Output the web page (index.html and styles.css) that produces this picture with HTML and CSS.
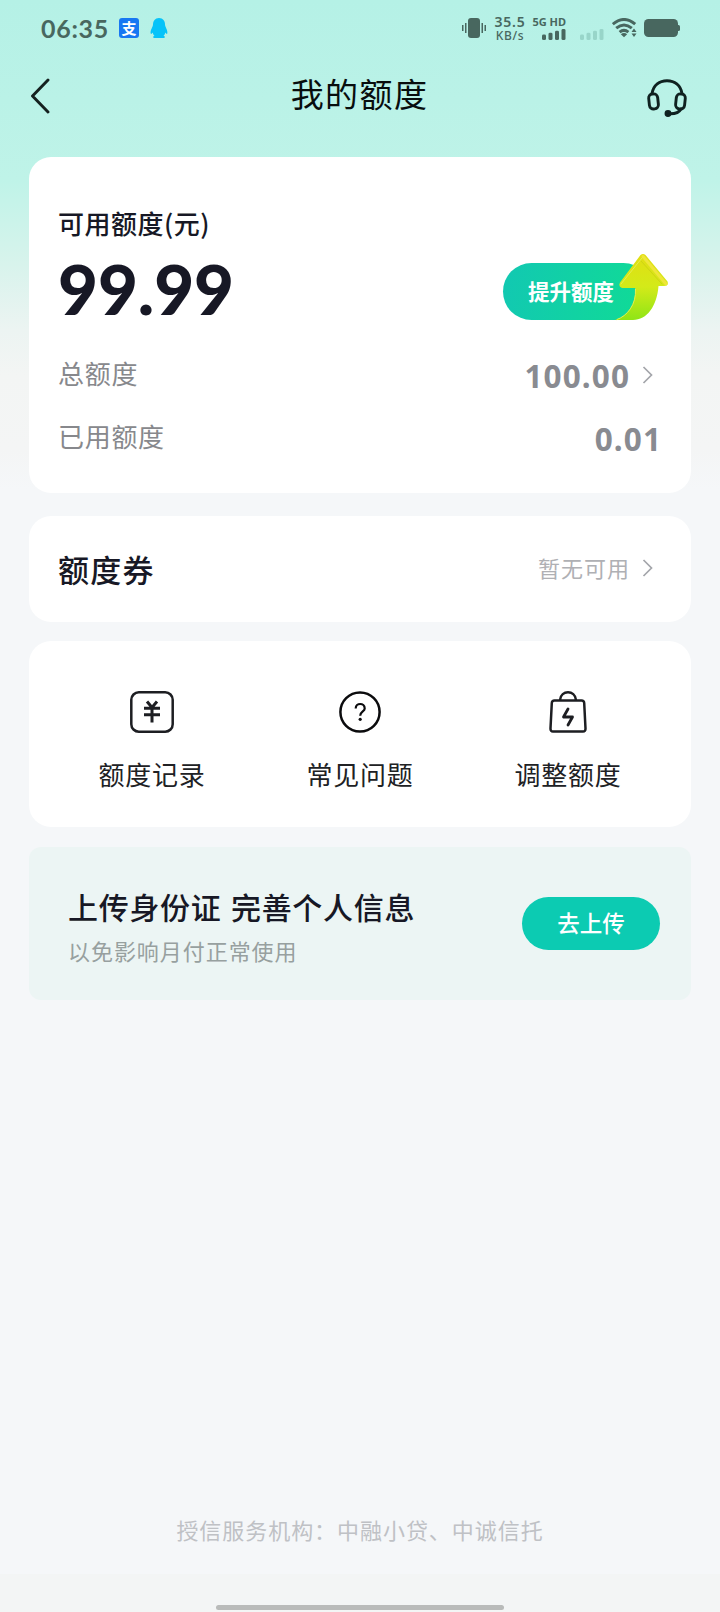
FILE: index.html
```html
<!DOCTYPE html>
<html lang="zh-CN">
<head>
<meta charset="utf-8">
<title>我的额度</title>
<link rel="stylesheet" href="styles.css">
</head>
<body>
<div class="page">
  <header class="status">
    <span class="clock">06:35</span>
    <svg class="app-alipay" width="20" height="20" viewBox="0 0 20 20"><rect width="20" height="20" rx="3" fill="#1777f2"/><text class="alipay-text" x="10" y="15.500" text-anchor="middle">支</text></svg>
    <svg class="app-qq" width="18" height="20" viewBox="0 0 18 20"><path d="M9 0C5 0 3 3 3 6.500C3 9 0 12 0.700 15.500C1 16.500 2 15.500 2.700 14.500C3 16 3.600 17 4.500 17.800C3 18 2.500 19.800 4 20H14C15.500 19.800 15 18 13.500 17.800C14.400 17 15 16 15.300 14.500C16 15.500 17 16.500 17.300 15.500C18 12 15 9 15 6.500C15 3 13 0 9 0Z" fill="#06c3f9"/></svg>
    <span class="spacer"></span>
    <svg width="24" height="20" viewBox="0 0 24 20" fill="#48675f"><rect x="6" width="12" height="20" rx="3"/><rect x="0" y="7" width="1.500" height="6"/><rect x="3" y="5" width="1.500" height="10"/><rect x="19.500" y="5" width="1.500" height="10"/><rect x="22.500" y="7" width="1.500" height="6"/></svg>
    <div class="speed"><b>35.5</b><span>KB/s</span></div>
    <div class="network"><span>5G HD</span>
      <svg width="24" height="11" viewBox="0 0 24 12" preserveAspectRatio="none" fill="#48675f"><rect y="6" width="4" height="6" rx="1.500"/><rect x="6.500" y="4" width="4" height="8" rx="1.500"/><rect x="13" y="2" width="4" height="10" rx="1.500"/><rect x="19.500" y="0" width="4" height="12" rx="1.500"/></svg>
    </div>
    <svg class="sim2" width="24" height="11" viewBox="0 0 24 12" preserveAspectRatio="none" fill="#98d5c9"><rect y="6" width="4" height="6" rx="1.500"/><rect x="6.500" y="4" width="4" height="8" rx="1.500"/><rect x="13" y="2" width="4" height="10" rx="1.500"/><rect x="19.500" y="0" width="4" height="12" rx="1.500"/></svg>
    <svg class="wifi" width="25" height="20" viewBox="0 0 25 20" fill="none" stroke="#48675f" stroke-width="3"><path d="M0.800 6.200Q12 -3.200 23.200 6.200M4.200 10.200Q12 3.700 19.800 10.200M7.600 14.100Q12 10.600 16.400 14.100"/><path d="M8.800 16.200Q12 13.900 15.200 16.200L12 19.300Z" fill="#48675f" stroke="none"/><path d="M19.500 14L22 10.500L24.500 14ZM19.500 15.500L22 19L24.500 15.500Z" fill="#48675f" stroke="none"/></svg>
    <svg width="36" height="18" viewBox="0 0 36 18" fill="#48675f"><rect width="34" height="18" rx="4.500"/><rect x="32" y="6" width="4" height="6" rx="1.500"/></svg>
  </header>

  <nav class="nav">
    <svg width="20" height="36" viewBox="0 0 20 36" fill="none" stroke="#15211f" stroke-width="2.900" stroke-linecap="round" stroke-linejoin="round"><path d="M18 2L2.500 18L18 34"/></svg>
    <h1 class="title">我的额度</h1>
    <svg class="service" width="40" height="38" viewBox="0 0 40 38" fill="none" stroke="#0f2120" stroke-width="2.900" stroke-linecap="round"><path d="M5 14.500C6.500 6 12.500 1.700 20 1.700S33.500 6 35 14.500"/><rect x="2" y="15" width="9" height="15" rx="4" transform="rotate(-6 6 22)"/><rect x="29" y="15" width="9" height="15" rx="4" transform="rotate(6 34 22)"/><path d="M34 30C32 33.700 28 35 22 34.700"/><circle cx="21" cy="34.500" r="2" fill="#0f2120"/></svg>
  </nav>

  <main class="content">
    <section class="card quota">
      <div class="available">
        <div>
          <div class="label">可用额度(元)</div>
          <div class="amount">99.99</div>
        </div>
        <div class="raise">提升额度
          <svg class="raise-arrow" width="56" height="72" viewBox="0 0 56 72">
            <defs>
              <linearGradient id="arrow" x1="0" y1="0" x2="0" y2="1"><stop offset="0" stop-color="#e2de12"/><stop offset=".5" stop-color="#d3ea19"/><stop offset="1" stop-color="#8fe516"/></linearGradient>
            </defs>
            <path d="M26.500 3Q29 1 31.500 3L53.500 29.500Q55 34 50 34H44.500C43 54 33 68 19 68H1C12 65 22 55 21.500 36H8Q4 35 6 30.500Z" fill="url(#arrow)"/>
            <path d="M29 4.500L52 32" stroke="#efe63a" stroke-width="3" stroke-linecap="round"/>
            <path d="M27 9L48 32" stroke="#cdd414" stroke-width="1" stroke-linecap="round"/>
            <path d="M28 6L7 32M21.500 37C22.500 53 13 64 3 67.500" fill="none" stroke="#e6ee50" stroke-width="1" stroke-linecap="round"/>
          </svg>
        </div>
      </div>
      <div class="row total"><span>总额度</span><span class="value">100.00<svg class="chev" width="11" height="18" viewBox="0 0 11 18"><path d="M1.500 1L9.500 9L1.500 17"/></svg></span></div>
      <div class="row used"><span>已用额度</span><span class="value">0.01</span></div>
    </section>

    <section class="card coupon">
      <span class="coupon-title">额度券</span>
      <span class="coupon-state">暂无可用<svg class="chev" width="11" height="18" viewBox="0 0 11 18"><path d="M1.500 1L9.500 9L1.500 17"/></svg></span>
    </section>

    <section class="card tools">
      <div class="tool">
        <svg width="44" height="42" viewBox="0 0 44 42" fill="none" stroke="#1d1e22" stroke-width="2.500"><rect x="1.300" y="1.300" width="41.400" height="39.400" rx="7.500"/><path d="M17 10.500L22 16.500L27 10.500M14 17.200H30M14 23.800H30M22 16.500V31.500" stroke-width="3"/></svg>
        <span>额度记录</span>
      </div>
      <div class="tool">
        <svg width="42" height="42" viewBox="0 0 42 42" fill="none" stroke="#0b0b0d" stroke-width="2.500"><circle cx="21" cy="21" r="19.600"/><path d="M16.700 17.500C16.700 11.500 25.700 11.500 25.700 17.500C25.700 20.500 21.200 20.500 21.200 24.800" stroke-width="2.200"/><circle cx="21.200" cy="28.300" r="1.600" fill="#0b0b0d" stroke="none"/></svg>
        <span>常见问题</span>
      </div>
      <div class="tool">
        <svg width="38" height="42" viewBox="0 0 38 42" fill="none" stroke="#1d1e22" stroke-width="2.500" stroke-linejoin="round" stroke-linecap="round"><path d="M5.500 9.500H32.500Q35 9.500 35.200 12L36.500 37.500Q36.600 40.500 34 40.500H4Q1.400 40.500 1.500 37.500L2.800 12Q3 9.500 5.500 9.500ZM11 9C12 -1.300 26 -1.300 27 9"/><path d="M19 18L14.500 26H23.500L19 34" stroke-width="2.800"/></svg>
        <span>调整额度</span>
      </div>
    </section>

    <section class="upload">
      <div class="upload-text">
        <div class="upload-title">上传身份证 完善个人信息</div>
        <div class="upload-note">以免影响月付正常使用</div>
      </div>
      <div class="upload-btn">去上传</div>
    </section>
  </main>

  <p class="provider">授信服务机构：中融小贷、中诚信托</p>
  <footer class="home"><div class="home-bar"></div></footer>
</div>
</body>
</html>
```
FILE: styles.css
```css
* { box-sizing: border-box; }
body { margin: 0; font-family: "Noto Sans CJK SC", sans-serif; color: #171825; }
svg { display: block; flex: none; }
.page {
  width: 720px; height: 1612px; display: flex; flex-direction: column;
  background: linear-gradient(180deg, #b5f1e6 0, #baf2e7 100px, #bff3e8 180px, #d8f3ec 265px, #ecf4f2 330px, #f3f5f4 375px, #f4f5f5 450px, #f5f7f9 490px);
}
.status { height: 56px; padding: 0 40px 0 41px; display: flex; align-items: center; color: #48675f; }
.clock { font: 700 25px/54px Lato, sans-serif; letter-spacing: .7px; width: 78px; }
.app-qq { margin-left: 11px; }
.alipay-text { font: 700 15px "Noto Sans CJK SC", sans-serif; fill: #fff; }
.spacer { flex: 1; }
.speed { width: 34px; margin-left: 7px; display: flex; flex-direction: column; align-items: center; font: 12px/13px "Noto Sans", sans-serif; }
.speed b { font-size: 14px; line-height: 14px; font-weight: 600; letter-spacing: .8px; }
.speed span { font-weight: 500; letter-spacing: .6px; }
.network { width: 34px; margin: 0 1px 0 5px; display: flex; flex-direction: column; gap: 2px; align-items: flex-end; font: 700 11px/10px "Noto Sans", sans-serif; white-space: nowrap; }
.sim2 { margin: 12px 0 0 13px; }
.wifi { margin: 0 7px 0 8px; }
.nav { height: 101px; padding: 0 32px 21px 30px; display: flex; align-items: center; }
.title { flex: 1; margin: -7px 0 0 22px; text-align: center; font-size: 33px; font-weight: 400; line-height: 40px; letter-spacing: 1.400px; color: #080d0d; }
.service { margin: 4px 1px 0 0; }
.content { padding: 0 29px; display: flex; flex-direction: column; }
.card { background: #fff; border-radius: 22px; }
.quota { height: 336px; padding: 49px 30px 0 29px; }
.available { display: flex; justify-content: space-between; height: 121px; }
.label { font-size: 26px; line-height: 34px; letter-spacing: .5px; font-weight: 500; }
.amount { font: 900 69px/80px Lato, sans-serif; padding-top: 9px; letter-spacing: -.1px; }
.raise {
  position: relative; width: 149px; height: 57px; margin: 57px 9px 0 0; padding-left: 25px; border-radius: 29px;
  background: linear-gradient(100deg, #12c8b2, #10dc94); color: #fff; font-size: 21.500px; line-height: 55px; font-weight: 700; white-space: nowrap;
}
.raise-arrow { position: absolute; right: -18px; top: -11px; }
.row { display: flex; justify-content: space-between; height: 63px; align-items: center; font-size: 26px; color: #87888c; letter-spacing: .7px; }
.total { margin-top: 14px; }
.value { display: flex; align-items: center; font: 700 31.500px/40px "Noto Sans", sans-serif; letter-spacing: 1.100px; color: #898b91; margin-top: 6px; }
.total .value { padding-right: 8px; }
.used .value { margin-right: -1px; }
.chev { margin-left: 12px; fill: none; stroke: #a3a5aa; stroke-width: 1.700; }
.total .chev { margin-top: -1px; }
.coupon { height: 106px; margin-top: 23px; padding: 0 38px 0 29px; display: flex; align-items: center; justify-content: space-between; }
.coupon-title { font-size: 31px; line-height: 44px; letter-spacing: 1.300px; font-weight: 500; }
.coupon-state { display: flex; align-items: center; font-size: 22px; line-height: 30px; letter-spacing: 1px; color: #afb0b4; margin-top: -4px; }
.coupon .chev { margin-top: 2px; }
.tools { height: 186px; margin-top: 19px; padding: 50px 19px 0; display: grid; grid-template-columns: repeat(3, 1fr); }
.tool { display: flex; flex-direction: column; align-items: center; gap: 22px; font-size: 26px; line-height: 38px; letter-spacing: .8px; color: #202124; }
.upload { height: 153px; margin-top: 20px; padding: 0 31px 0 39px; border-radius: 12px; background: #ecf5f4; display: flex; align-items: center; justify-content: space-between; }
.upload-text { padding-top: 8px; }
.upload-title { font-size: 30px; line-height: 44px; font-weight: 500; letter-spacing: .7px; word-spacing: 2px; white-space: pre; }
.upload-note { font-size: 22px; line-height: 44px; letter-spacing: .95px; color: #97a09f; }
.upload-btn { width: 138px; height: 53px; border-radius: 27px; background: #0ccbb2; color: #fff; text-align: center; font-size: 22.500px; line-height: 51px; font-weight: 500; }
.provider { margin: auto 0 29px; text-align: center; font-size: 22px; line-height: 32px; letter-spacing: .95px; color: #bfc1c5; }
.home { height: 38px; background: #f3f5f5; padding-top: 31px; }
.home-bar { width: 288px; height: 5px; margin: 0 auto; border-radius: 3px; background: #b9bbba; }
```
